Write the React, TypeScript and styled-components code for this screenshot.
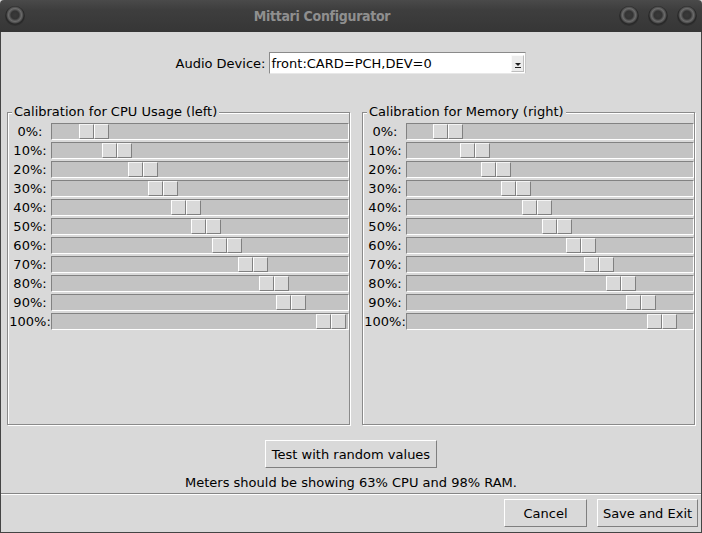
import React from "react";
import styled, { createGlobalStyle } from "styled-components";

const GlobalStyle = createGlobalStyle`
  html, body {
    margin: 0;
    padding: 0;
    background: #d9d9d9;
  }
  body {
    font-family: "DejaVu Sans", "Liberation Sans", sans-serif;
    font-size: 13px;
    color: #000;
  }
`;

const Window = styled.div`
  width: 702px;
  height: 533px;
  display: flex;
  flex-direction: column;
  box-sizing: border-box;
  overflow: hidden;
`;

const TitleBar = styled.div`
  height: 32px;
  flex: none;
  display: flex;
  align-items: center;
  padding: 0 5px;
  background: linear-gradient(#4a4a4a, #3e3e3e 30%, #363636);
  border-radius: 4px 4px 0 0;
`;

const TitleText = styled.div`
  flex: 1;
  text-align: center;
  color: #8f8f8f;
  font-family: "DejaVu Sans", sans-serif;
  font-stretch: condensed;
  font-weight: bold;
  font-size: 14px;
  letter-spacing: -0.3px;
`;

const WinButtons = styled.div`
  display: flex;
  gap: 9px;
`;

const WinButton = styled.div`
  width: 20px;
  height: 20px;
  border-radius: 50%;
  background: radial-gradient(
    circle at 50% 45%,
    #3a3a3a 0,
    #333 4px,
    #4d4d4d 5px,
    #6a6a6a 6.5px,
    #4a4a4a 8px,
    #262626 9px,
    #2e2e2e 10px
  );
`;

const Body = styled.div`
  flex: 1;
  display: flex;
  flex-direction: column;
  background: #d9d9d9;
  border: 1px solid #444;
  border-top: none;
`;

const AudioRow = styled.div`
  margin-top: 20px;
  display: flex;
  justify-content: center;
  align-items: center;
  gap: 4px;
  height: 22px;
`;

const Combo = styled.div`
  width: 257px;
  height: 22px;
  box-sizing: border-box;
  display: flex;
  align-items: center;
  background: #fff;
  border: 1px solid #8a8a8a;
  border-right-color: #c8c8c8;
  border-bottom-color: #e8e8e8;
  padding-left: 1px;
`;

const ComboText = styled.span`
  flex: 1;
`;

const ComboArrow = styled.div`
  width: 13px;
  height: 17px;
  margin-right: 1px;
  box-sizing: border-box;
  display: flex;
  flex-direction: column;
  align-items: center;
  justify-content: flex-end;
  padding-bottom: 3px;
  gap: 1px;
  background: #ececec;
  border: 1px solid #fafafa;
  border-right-color: #bdbdbd;
  border-bottom-color: #bdbdbd;
`;

const ArrowTri = styled.div`
  width: 0;
  height: 0;
  border-left: 3px solid transparent;
  border-right: 3px solid transparent;
  border-top: 3px solid #222;
`;

const ArrowBar = styled.div`
  width: 6px;
  height: 1px;
  background: #222;
`;

const FrameRow = styled.div`
  display: flex;
  gap: 12px;
  padding: 0 6px;
  margin-top: 30px;
`;

const Frame = styled.fieldset<{ $inner: number }>`
  margin: 0;
  padding: 0 0 0 1px;
  min-width: 0;
  width: ${({ $inner }) => $inner + 45}px;
  box-sizing: border-box;
  border: 1px solid #8a8a8a;
  box-shadow: 1px 1px 0 #fff, inset 1px 1px 0 #fff;
  height: 321px;
`;

const Legend = styled.legend`
  margin-left: 3px;
  padding: 0 2px;
  line-height: 16px;
  background: #d9d9d9;
`;

const Rows = styled.div`
  display: grid;
  grid-template-columns: 42px 1fr;
  grid-auto-rows: 17px;
  row-gap: 2px;
  padding-top: 3px;
`;

const RowLabel = styled.div`
  text-align: center;
  line-height: 17px;
`;

const Trough = styled.div`
  display: flex;
  box-sizing: border-box;
  height: 17px;
  background: #c3c3c3;
  border-top: 1px solid #828282;
  border-left: 1px solid #828282;
  border-bottom: 1px solid #fff;
  border-right: 1px solid #fff;
`;

const Thumb = styled.div`
  display: flex;
  height: 15px;
`;

const ThumbHalf = styled.div`
  width: 15px;
  height: 15px;
  box-sizing: border-box;
  background: #d9d9d9;
  border-top: 1px solid #f4f4f4;
  border-left: 1px solid #fff;
  border-bottom: 1px solid #808080;
  border-right: 1px solid #808080;
`;

const Button = styled.button<{ $width?: number }>`
  font-family: "DejaVu Sans", "Liberation Sans", sans-serif;
  font-size: 13px;
  color: #000;
  height: 28px;
  box-sizing: border-box;
  padding: 0 4px;
  white-space: nowrap;
  width: ${({ $width }) => ($width ? `${$width}px` : "auto")};
  background: #d9d9d9;
  border: 1px solid #fff;
  border-right-color: #7f7f7f;
  border-bottom-color: #7f7f7f;
  border-radius: 0;
`;

const Center = styled.div`
  display: flex;
  justify-content: center;
  margin-top: 15px;
`;

const Status = styled.div`
  text-align: center;
  line-height: 16px;
  margin-top: 7px;
`;

const Separator = styled.div`
  margin-top: 2px;
  height: 1px;
  background: #858585;
  border-bottom: 1px solid #fff;
`;

const Footer = styled.div`
  display: flex;
  justify-content: flex-end;
  gap: 10px;
  padding: 4px 3px 0 0;
`;

const labels = ["0%:", "10%:", "20%:", "30%:", "40%:", "50%:", "60%:", "70%:", "80%:", "90%:", "100%:"];
const cpuOffsets = [27, 50, 76, 96, 119, 139, 160, 186, 207, 224, 264];
const memOffsets = [26, 53, 74, 94, 115, 135, 159, 177, 199, 219, 240];

function Calibration({ title, inner, offsets }: { title: string; inner: number; offsets: number[] }) {
  return (
    <Frame $inner={inner}>
      <Legend>{title}</Legend>
      <Rows>
        {labels.map((label, i) => (
          <React.Fragment key={label}>
            <RowLabel>{label}</RowLabel>
            <Trough>
              <Thumb style={{ marginLeft: offsets[i] }}>
                <ThumbHalf />
                <ThumbHalf />
              </Thumb>
            </Trough>
          </React.Fragment>
        ))}
      </Rows>
    </Frame>
  );
}

export default function App() {
  return (
    <Window>
      <GlobalStyle />
      <TitleBar>
        <WinButton />
        <TitleText>Mittari Configurator</TitleText>
        <WinButtons>
          <WinButton />
          <WinButton />
          <WinButton />
        </WinButtons>
      </TitleBar>
      <Body>
        <AudioRow>
          <span>Audio Device:</span>
          <Combo>
            <ComboText>front:CARD=PCH,DEV=0</ComboText>
            <ComboArrow>
              <ArrowTri />
              <ArrowBar />
            </ComboArrow>
          </Combo>
        </AudioRow>
        <FrameRow>
          <Calibration title="Calibration for CPU Usage (left)" inner={298} offsets={cpuOffsets} />
          <Calibration title="Calibration for Memory (right)" inner={288} offsets={memOffsets} />
        </FrameRow>
        <Center>
          <Button $width={172}>Test with random values</Button>
        </Center>
        <Status>Meters should be showing 63% CPU and 98% RAM.</Status>
        <Separator />
        <Footer>
          <Button $width={83}>Cancel</Button>
          <Button $width={101}>Save and Exit</Button>
        </Footer>
      </Body>
    </Window>
  );
}
